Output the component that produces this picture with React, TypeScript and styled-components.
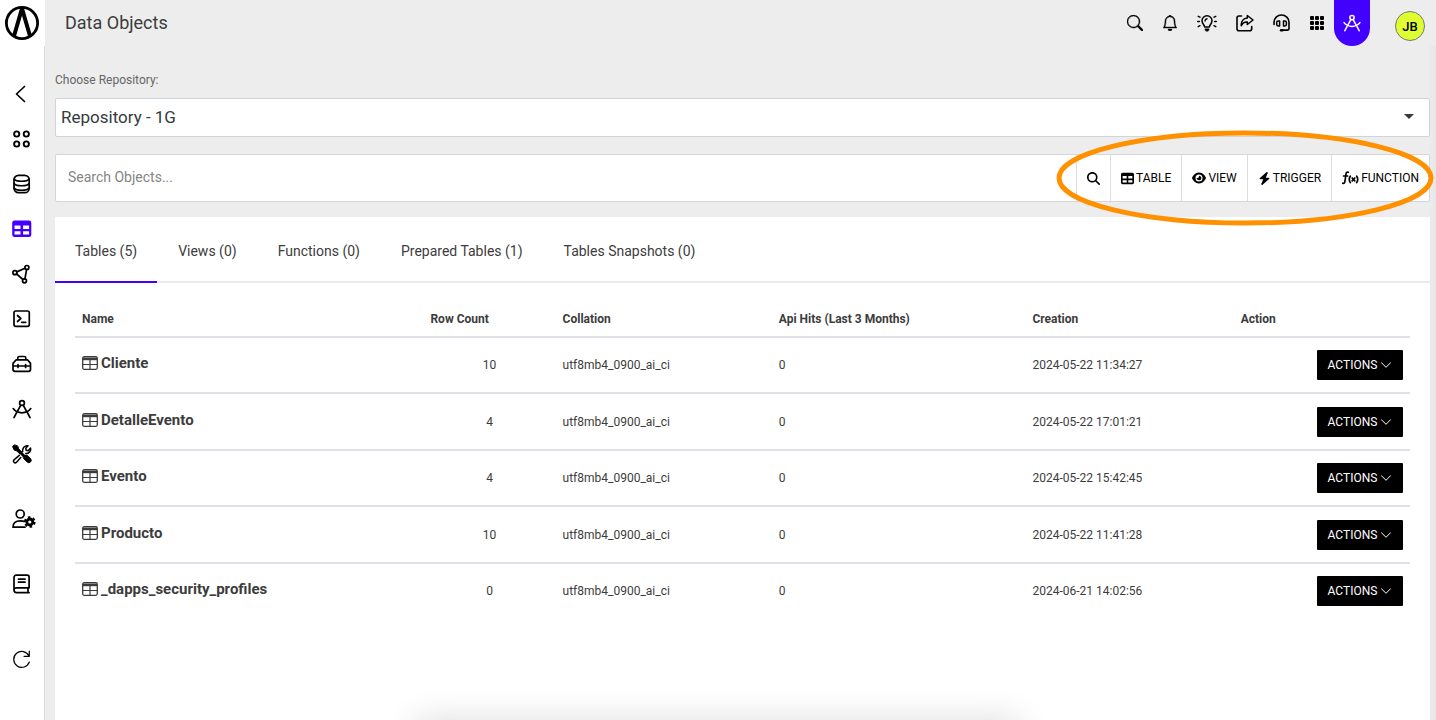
import React from "react";
import styled, { createGlobalStyle } from "styled-components";
import { BsSearch, BsBell, BsChevronDown, BsGrid3X3GapFill } from "react-icons/bs";
import { FaTable, FaEye, FaBolt, FaMagnifyingGlass } from "react-icons/fa6";

const GlobalStyle = createGlobalStyle`
  * { box-sizing: border-box; }
  html, body, #root { height: 100%; }
  body {
    margin: 0;
    background: #ededed;
    color: #3c3c3c;
    font-family: Roboto, "Liberation Sans", sans-serif;
    font-size: 12px;
    overflow: hidden;
  }
  button, input, select { font: inherit; color: inherit; }
  button { cursor: pointer; }
`;

const Shell = styled.div`
  display: flex;
  min-height: 100vh;
`;

const Sidebar = styled.aside`
  flex: none;
  width: 45px;
  background: #fff;
  color: #000;
`;

const LogoLink = styled.a`
  display: flex;
  align-items: center;
  height: 46px;
  padding-left: 4px;
  color: #000;
`;

const SideNav = styled.nav`
  display: flex;
  flex-direction: column;
  min-height: calc(100vh - 46px);
  padding-top: 25px;
  border-right: 1px solid #dcdcdc;
`;

const SideLink = styled.a<{ $active?: boolean; $gap?: number }>`
  display: flex;
  flex: none;
  align-items: center;
  height: 45px;
  margin-top: ${(p) => p.$gap ?? 0}px;
  padding-left: 12px;
  color: ${(p) => (p.$active ? "#4200ff" : "#000")};
`;

const Page = styled.div`
  display: flex;
  flex: 1;
  flex-direction: column;
  min-width: 0;
`;

const Header = styled.header`
  display: flex;
  align-items: flex-start;
  height: 46px;
  padding: 0 11px 0 20px;
`;

const Title = styled.h1`
  flex: 1;
  margin: 0;
  font-size: 18px;
  font-weight: 400;
  line-height: 46px;
`;

const HeaderTools = styled.div`
  display: flex;
  align-items: center;
  gap: 19px;
  height: 46px;
  margin-right: 9px;
`;

const IconButton = styled.button`
  display: flex;
  padding: 0;
  border: 0;
  background: none;
  color: #000;
`;

const StudioButton = styled.button`
  display: flex;
  align-items: center;
  justify-content: center;
  width: 36px;
  height: 46px;
  padding: 0;
  border: 0;
  border-radius: 0 0 18px 18px;
  background: #4200ff;
  color: #fff;
`;

const Avatar = styled.button`
  width: 30px;
  height: 30px;
  margin: 11px 0 0 25px;
  padding: 0;
  border: 1px solid #777;
  border-radius: 50%;
  background: #e0ff30;
  color: #000;
  font-size: 13px;
  font-weight: 500;
`;

const Content = styled.main`
  display: flex;
  flex: 1;
  flex-direction: column;
  padding: 0 6px 0 10px;
  background: linear-gradient(to left, #e6e6e6, #ededed 8px);
`;

const RepoLabel = styled.label`
  margin-top: 24px;
  color: #666;
  line-height: 20px;
`;

const SelectBox = styled.div`
  position: relative;
  margin-top: 8px;
`;

const RepoSelect = styled.select`
  display: block;
  width: 100%;
  height: 39px;
  padding: 0 5px 2px;
  appearance: none;
  border: 1px solid #ced4da;
  border-radius: 2px;
  background: #fff;
  color: #343a40;
  font-size: 17px;
`;

const Caret = styled.svg`
  position: absolute;
  top: 16px;
  right: 16px;
  pointer-events: none;
`;

const Toolbar = styled.div`
  position: relative;
  display: flex;
  height: 48px;
  margin-top: 17px;
  border: 1px solid #d4d6dc;
  border-radius: 2px;
  background: #fff;
`;

const SearchInput = styled.input`
  flex: 1;
  min-width: 0;
  padding: 0 12px 2px;
  border: 0;
  background: none;
  font-size: 14px;
  &::placeholder { color: #858585; opacity: 1; }
`;

const ToolButton = styled.button`
  display: flex;
  align-items: center;
  gap: 2px;
  padding: 0 10px;
  border: 0;
  border-left: 1px solid #dcdcdc;
  background: none;
  color: #000;
  white-space: nowrap;
`;

const Highlight = styled.svg`
  position: absolute;
  top: -25px;
  right: -5px;
  pointer-events: none;
`;

const Panel = styled.section`
  flex: 1;
  margin-top: 15px;
  background: #fff;
`;

const Tabs = styled.div`
  display: flex;
  gap: 1px;
  border-bottom: 2px solid #ebebeb;
`;

const Tab = styled.button<{ $active?: boolean }>`
  height: 66px;
  margin-bottom: -2px;
  padding: 4px 20px 0;
  border: 0;
  border-bottom: 2px solid ${(p) => (p.$active ? "#4200ff" : "transparent")};
  background: none;
  font-size: 14px;
`;

const TableWrap = styled.div`
  padding: 17px 20px;
`;

const DataTable = styled.table`
  width: 100%;
  table-layout: fixed;
  border-collapse: separate;
  border-spacing: 0;
`;

const HeadCell = styled.th<{ $width?: string }>`
  width: ${(p) => p.$width ?? "auto"};
  height: 38px;
  padding: 2px 7px 0;
  border-bottom: 2px solid #dee2e6;
  text-align: left;
  font-weight: 700;
`;

const Row = styled.tr`
  height: 56px;
  &:nth-child(even) { height: 57px; }
  &:last-child > td { border-bottom-color: transparent; }
`;

const Cell = styled.td<{ $align?: "center" | "right" }>`
  padding: 0 7px;
  border-bottom: 2px solid #dee2e6;
  text-align: ${(p) => p.$align ?? "left"};
`;

const ObjectName = styled.a`
  display: flex;
  align-items: center;
  gap: 3px;
  padding-bottom: 4px;
  color: inherit;
  font-size: 15px;
  font-weight: 700;
  text-decoration: none;
`;

const ActionsButton = styled.button`
  display: inline-flex;
  align-items: center;
  justify-content: center;
  gap: 3px;
  width: 86px;
  height: 30px;
  padding: 0;
  border: 0;
  border-radius: 1px;
  background: #000;
  color: #fff;
  vertical-align: middle;
`;

const BottomShade = styled.div`
  position: fixed;
  top: 100%;
  left: 29%;
  right: 29%;
  height: 40px;
  box-shadow: 0 0 34px rgba(0, 0, 0, 0.14);
`;

type DrawingProps = { w?: number; h?: number; box: string; children: React.ReactNode };

const Drawing = ({ w = 20, h = 20, box, children }: DrawingProps) => (
  <svg width={w} height={h} viewBox={box} fill="none" stroke="currentColor" strokeWidth="1.7" strokeLinecap="round" strokeLinejoin="round" aria-hidden="true">
    {children}
  </svg>
);

const Logo = () => (
  <svg width="36" height="36" viewBox="0 0 36 36" fill="none" stroke="currentColor" aria-hidden="true">
    <circle cx="18" cy="18" r="15.6" strokeWidth="2.8" />
    <path d="M18 3.500 10 31M18 3.500l8 27.500" strokeWidth="4" />
  </svg>
);

const CompassIcon = ({ size = 20 }: { size?: number }) => (
  <Drawing w={size} h={size} box="0 0 20 20">
    <circle cx="10" cy="4" r="2.400" />
    <path d="M8.800 6.200 5.800 11.600M4.400 14 2 18.600M11.200 6.200l3 5.400M15.600 14l2.400 4.600M1.200 9.600c2 2.700 5 4.200 8.800 4.200s6.800-1.500 8.800-4.200" />
  </Drawing>
);

const BackIcon = () => <Drawing box="0 0 20 20"><path d="M12.500 2.500 4.500 10l8 7.500" /></Drawing>;
const AppsIcon = () => (
  <Drawing box="0 0 20 20">
    <g strokeWidth="1.900">
      <circle cx="4.700" cy="5" r="2.600" /><circle cx="14.300" cy="5" r="2.600" />
      <circle cx="4.700" cy="15" r="2.600" /><circle cx="14.300" cy="15" r="2.600" />
    </g>
  </Drawing>
);
const DatabaseIcon = () => (
  <Drawing box="0 0 20 20">
    <rect x="2" y="1.300" width="15.200" height="17.400" rx="4.500" />
    <path d="M2 5c1 1.500 4 2.300 7.600 2.300S16.200 6.500 17.200 5M2 9.500c1 1.500 4 2.300 7.600 2.300s6.600-.8 7.600-2.300M2 14c1 1.500 4 2.300 7.600 2.300s6.600-.8 7.600-2.300" strokeWidth="1.500" />
  </Drawing>
);
const TablesIcon = () => (
  <Drawing box="0 0 20 20">
    <path fill="currentColor" stroke="none" fillRule="evenodd" d="M2.500 1.500h14.500a2.300 2.300 0 0 1 2.300 2.300v12a2.300 2.300 0 0 1-2.300 2.300H2.500A2.300 2.300 0 0 1 .2 15.800v-12a2.300 2.300 0 0 1 2.300-2.300zM2.500 6.500v3.600h6V6.500zm8.600 0v3.600h6V6.500zM2.500 12.300v3.300h6v-3.300zm8.600 0v3.300h6v-3.300z" />
  </Drawing>
);
const GraphIcon = () => (
  <Drawing box="0 0 20 20">
    <circle cx="2.900" cy="8.700" r="2" /><circle cx="14.900" cy="3.500" r="2" /><circle cx="12.500" cy="16.800" r="2" />
    <path d="M4.800 7.900 13 4.300M4.500 9.900l6.500 5.600M14.600 5.500l-1.700 9.300" />
  </Drawing>
);
const TerminalIcon = () => (
  <Drawing box="0 0 20 20">
    <rect x="2" y="2" width="15.300" height="15.300" rx="1.800" />
    <path d="m5.500 6.500 3.300 3-3.300 3M9.700 13.300h4" />
  </Drawing>
);
const ToolboxIcon = () => (
  <Drawing box="0 0 20 20">
    <path d="M4.200 5.800h11.300l3 3.600v5.900a2 2 0 0 1-2 2H3a2 2 0 0 1-2-2V9.400zM5.800 5.600V4c0-1 .6-1.500 1.400-1.500h5.200c.9 0 1.400.6 1.400 1.500v1.600M1 12h17.500M6 10.500v3M13.600 10.500v3" />
  </Drawing>
);
const RepairIcon = () => (
  <Drawing box="0 0 20 20">
    <path d="M2.200 1 .6 2.600l1.600 3.500 2.600.8 3.300 3.300 2-2-3.400-3.300-.8-2.500z" fill="currentColor" strokeWidth="1" />
    <path d="m9.500 9.500 2.200 2.200" strokeWidth="3" />
    <path d="m11.500 13.200 1.900-2.100 2 .3 3.100 3.300a2.300 2.300 0 0 1-3.300 3.300l-3.400-3.200z" fill="currentColor" strokeWidth="1" />
    <path d="M10.700 7.500c-.5-3.500 2.300-6.400 5.300-5.700l-2.200 2.500.4 2 2 .4L18.500 4c.8 3-1.500 5.600-4.700 5.500M7.300 11.400 2 15.800c-1.500 1.700.7 4 2.300 2.600l4.500-4.900" strokeWidth="1.500" />
  </Drawing>
);
const UserGearIcon = () => (
  <Drawing w={24} box="0 0 24 20">
    <circle cx="8.200" cy="5" r="4" />
    <path d="M12.500 12.400c-1.300-.4-2.700-.5-4.300-.5-4.500 0-7.200 2-7.200 6.300h12" />
    <circle cx="17.800" cy="13" r="3" strokeWidth="2.800" />
    <circle cx="17.800" cy="13" r="4.900" strokeWidth="1.900" strokeDasharray="2.600 2.530" strokeLinecap="butt" />
  </Drawing>
);
const BookIcon = () => (
  <Drawing box="0 0 20 20">
    <path d="M4.300 1.200h10.900c1.200 0 1.900.7 1.900 1.900v10.700H4.500C3 13.800 2 14.800 2 16s1 2.600 2.500 2.600h12.600M2 16V3.500c0-1.400 1-2.300 2.300-2.300M16 14v4.500M6.500 5.200H13M6.500 8.200H13" />
  </Drawing>
);
const RefreshIcon = () => (
  <Drawing box="0 0 20 20">
    <path d="M17.300 2v5.300H12M17 7A8 8 0 1 0 17.300 13" strokeWidth="1.200" />
  </Drawing>
);
const IdeaIcon = () => (
  <Drawing box="0 0 20 18" h={18}>
    <path d="M7.600 13c0-2.200-2.600-3-2.600-6.200a5 5 0 0 1 10 0c0 3.200-2.600 4-2.600 6.200z" strokeWidth="1.500" />
    <path d="M8.600 15.600h2.800M9.400 16.500h1.200" strokeWidth="2" />
    <path d="M3 3.200 1.200 2.300M17 3.200l1.800-.9M2.400 7.500H.7M17.600 7.500h1.700M3 11.700l-1.800 1M17 11.700l1.800 1M8 7a2.300 2.300 0 0 1 2-2.200" strokeWidth="1.400" />
  </Drawing>
);
const ShareIcon = () => (
  <Drawing w={18} h={18} box="0 0 18 18">
    <path d="M5.500 2H3a2 2 0 0 0-2 2v10.800a2 2 0 0 0 2 2h10.700a2 2 0 0 0 2-2v-2.300" strokeWidth="1.600" />
    <path d="M11.300 1.500 17 6l-5.700 4.500V8C8.500 7.800 6.500 9 5.300 11.800 4.800 7.500 7.300 4.200 11.300 4z" strokeWidth="1.500" />
  </Drawing>
);
const HeadsetIcon = () => (
  <Drawing w={17} h={18} box="0 0 17 18">
    <path d="M1 10.500V8.300a7.500 7.300 0 0 1 15 0v6c0 1-.8 1.800-1.800 1.800H8.500" strokeWidth="1.600" />
    <path d="M6.600 6.900v5H5.200c-.9 0-1.500-.5-1.500-1.400V8.300c0-.9.6-1.400 1.500-1.400zM10.500 6.900v5h1.400c.9 0 1.500-.5 1.500-1.400V8.300c0-.9-.6-1.400-1.500-1.400z" strokeWidth="1.500" />
    <path d="M8 16.300h1.500" strokeWidth="2.400" />
  </Drawing>
);
const FunctionIcon = () => (
  <Drawing w={17} h={14} box="0 0 17 14">
    <path d="M6.300 1.300C4.800.8 4.200 1.600 4 3L2.900 10.500c-.2 1.500-.9 2.200-2.200 1.700M1.600 5h4" strokeWidth="1.700" />
    <path d="M8.300 5.200c-1.300 2-1.300 4.400 0 6.400M14.700 5.200c1.300 2 1.300 4.400 0 6.400M10.200 7l2.600 2.800M12.800 7l-2.600 2.800" strokeWidth="1.700" />
  </Drawing>
);
const RowTableIcon = () => (
  <Drawing w={16} h={16} box="0 0 16 16">
    <rect x=".7" y="1.700" width="14.600" height="12.600" rx="1.500" strokeWidth="1.300" />
    <path d="M1 2.500h14v2.700H1z" fill="currentColor" stroke="none" />
    <path d="M8 5v9M1 9.500h14" strokeWidth="1.200" />
  </Drawing>
);

const sideItems = [
  { label: "Back", icon: <BackIcon /> },
  { label: "Apps", icon: <AppsIcon /> },
  { label: "Databases", icon: <DatabaseIcon /> },
  { label: "Data Objects", icon: <TablesIcon />, active: true },
  { label: "Connections", icon: <GraphIcon /> },
  { label: "Console", icon: <TerminalIcon /> },
  { label: "Toolbox", icon: <ToolboxIcon /> },
  { label: "Studio", icon: <CompassIcon /> },
  { label: "Utilities", icon: <RepairIcon /> },
  { label: "User settings", icon: <UserGearIcon />, gap: 20 },
  { label: "Documentation", icon: <BookIcon />, gap: 20 },
  { label: "Refresh", icon: <RefreshIcon />, gap: 30 },
];

const headerItems = [
  { label: "Search", icon: <BsSearch size={16} strokeWidth={0.4} /> },
  { label: "Notifications", icon: <BsBell size={16} strokeWidth={0.4} /> },
  { label: "Tips", icon: <IdeaIcon /> },
  { label: "Share", icon: <ShareIcon /> },
  { label: "Support", icon: <HeadsetIcon /> },
];

const tabs = ["Tables (5)", "Views (0)", "Functions (0)", "Prepared Tables (1)", "Tables Snapshots (0)"];

const columns = [
  { title: "Name", width: "26.1%" },
  { title: "Row Count", width: "9.9%" },
  { title: "Collation", width: "16.2%" },
  { title: "Api Hits (Last 3 Months)", width: "19%" },
  { title: "Creation", width: "15.6%" },
  { title: "Action" },
];

const rows = [
  { name: "Cliente", count: 10, created: "2024-05-22 11:34:27" },
  { name: "DetalleEvento", count: 4, created: "2024-05-22 17:01:21" },
  { name: "Evento", count: 4, created: "2024-05-22 15:42:45" },
  { name: "Producto", count: 10, created: "2024-05-22 11:41:28" },
  { name: "_dapps_security_profiles", count: 0, created: "2024-06-21 14:02:56" },
];

export default function App() {
  return (
    <>
      <GlobalStyle />
      <Shell>
        <Sidebar>
          <LogoLink href="#" aria-label="Home"><Logo /></LogoLink>
          <SideNav>
            {sideItems.map((item) => (
              <SideLink key={item.label} href="#" aria-label={item.label} $active={item.active} $gap={item.gap}>
                {item.icon}
              </SideLink>
            ))}
          </SideNav>
        </Sidebar>
        <Page>
          <Header>
            <Title>Data Objects</Title>
            <HeaderTools>
              {headerItems.map((item) => (
                <IconButton key={item.label} aria-label={item.label}>{item.icon}</IconButton>
              ))}
              <IconButton aria-label="Applications"><BsGrid3X3GapFill size={16} /></IconButton>
            </HeaderTools>
            <StudioButton aria-label="Studio"><CompassIcon size={18} /></StudioButton>
            <Avatar>JB</Avatar>
          </Header>
          <Content>
            <RepoLabel htmlFor="repository">Choose Repository:</RepoLabel>
            <SelectBox>
              <RepoSelect id="repository" defaultValue="1g">
                <option value="1g">Repository - 1G</option>
              </RepoSelect>
              <Caret width="10" height="5" viewBox="0 0 10 5" fill="#343a40" aria-hidden="true"><path d="M0 0h10L5 5z" /></Caret>
            </SelectBox>
            <Toolbar>
              <SearchInput aria-label="Search Objects" placeholder="Search Objects..." />
              <ToolButton aria-label="Search"><FaMagnifyingGlass size={13} /></ToolButton>
              <ToolButton><FaTable size={13} />TABLE</ToolButton>
              <ToolButton><FaEye size={14} />VIEW</ToolButton>
              <ToolButton><FaBolt size={13} />TRIGGER</ToolButton>
              <ToolButton><FunctionIcon />FUNCTION</ToolButton>
              <Highlight width="378" height="96" viewBox="0 0 378 96" fill="none" stroke="#ff9100" strokeWidth="5" aria-hidden="true">
                <ellipse cx="189" cy="48" rx="186" ry="45" />
              </Highlight>
            </Toolbar>
            <Panel>
              <Tabs role="tablist">
                {tabs.map((tab, i) => (
                  <Tab key={tab} role="tab" aria-selected={i === 0} $active={i === 0}>{tab}</Tab>
                ))}
              </Tabs>
              <TableWrap>
                <DataTable>
                  <thead>
                    <tr>
                      {columns.map((c) => <HeadCell key={c.title} scope="col" $width={c.width}>{c.title}</HeadCell>)}
                    </tr>
                  </thead>
                  <tbody>
                    {rows.map((r) => (
                      <Row key={r.name}>
                        <Cell><ObjectName href="#"><RowTableIcon />{r.name}</ObjectName></Cell>
                        <Cell $align="center">{r.count}</Cell>
                        <Cell>utf8mb4_0900_ai_ci</Cell>
                        <Cell>0</Cell>
                        <Cell>{r.created}</Cell>
                        <Cell $align="right"><ActionsButton>ACTIONS <BsChevronDown size={12} /></ActionsButton></Cell>
                      </Row>
                    ))}
                  </tbody>
                </DataTable>
              </TableWrap>
            </Panel>
          </Content>
        </Page>
      </Shell>
      <BottomShade />
    </>
  );
}
